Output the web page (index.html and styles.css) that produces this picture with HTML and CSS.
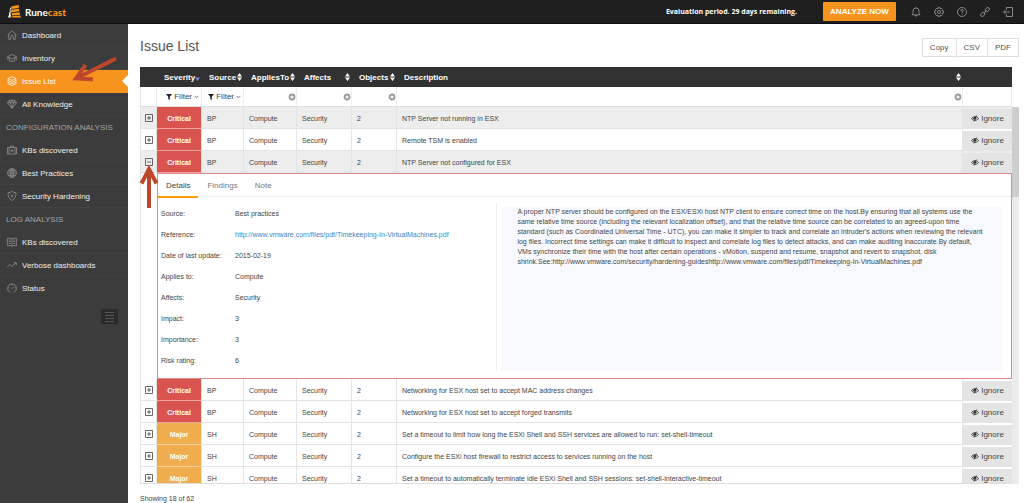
FILE: index.html
```html
<!DOCTYPE html>
<html lang="en">
<head>
    <meta charset="UTF-8">
    <meta name="viewport" content="width=device-width, initial-scale=1.0">
    <title>Runecast - Issue List</title>
    <link rel="stylesheet" href="styles.css">
</head>
<body>
    <!-- shared icons -->
    <svg class="icon-defs" aria-hidden="true">
        <symbol id="i-sort" viewBox="0 0 5 8"><path d="M2.5 0L5 3.400H0zM0 4.600h5L2.500 8z" fill="currentColor"/></symbol>
        <symbol id="i-sort-down" viewBox="0 0 5 8"><path d="M0 4.600h5L2.500 8z" fill="#7b83e8"/></symbol>
        <symbol id="i-funnel" viewBox="0 0 7 7"><path d="M0 0h7L4.400 3.200V7L2.600 5.800V3.200z" fill="#222"/></symbol>
        <symbol id="i-chevron" viewBox="0 0 5 4"><path d="M.5.8l2 2 2-2" fill="none" stroke="#555" stroke-width=".8"/></symbol>
        <symbol id="i-clear" viewBox="0 0 8 8"><circle cx="4" cy="4" r="2.500" fill="#fff" stroke="#999" stroke-width="1.800"/><path d="M3 3l2 2M5 3L3 5" stroke="#ddd" stroke-width=".5"/></symbol>
        <symbol id="i-plus" viewBox="0 0 8 8"><path d="M.5.5h7v7h-7zM2 4h4M4 2v4" fill="none" stroke="#444" stroke-width=".8"/></symbol>
        <symbol id="i-minus" viewBox="0 0 8 8"><path d="M.5.5h7v7h-7zM2 4h4" fill="none" stroke="#444" stroke-width=".8"/></symbol>
        <symbol id="i-hide" viewBox="0 0 9 7"><path d="M.5 3.500Q4.500-1 8.500 3.500 4.500 8 .5 3.500z" fill="none" stroke="#333" stroke-width=".9"/><circle cx="4.300" cy="3.300" r="1.600" fill="#333"/><path d="M6.300.2L3.300 6.800" stroke="#333" stroke-width=".9"/></symbol>
    </svg>

    <header class="topbar">
        <a class="brand" href="#">
            <svg class="brand-mark" viewBox="0 0 13 13" aria-hidden="true">
                <path d="M3.500 1.200L11 0l-.3 3-7.500 1zM3 4.800l8-1.100.3 2.600-8.500 1.200zM3.600 8.200l8-1 .4 2.500-8 .8zM3.800 11.200l8.600-.7.6 2H3.500z" fill="#f7941e"/>
                <path d="M2.300 2.500L1.600 6l.5.500-1.400 2 .7.500L0 12.500h2.600l.3-2.500-.6-1 .5-2-.4-1 .6-3z" fill="#fff"/>
            </svg>
            <span>Rune<b>cast</b></span>
        </a>
        <div class="top-actions">
            <span class="trial">Evaluation period. 29 days remaining.</span>
            <button class="analyze">ANALYZE NOW</button>
            <nav class="top-icons">
                <a href="#" aria-label="Notifications"><svg viewBox="0 0 10 10"><path d="M1 7.800h8L8 6.500V4a3 3 0 0 0-6 0v2.500zM4 8.200a1 1 0 0 0 2 0M5 1V.3"/></svg></a>
                <a href="#" aria-label="Settings"><svg viewBox="0 0 10 10"><path d="M4.200.5h1.600l.3 1.200 1.100-.5 1.400 1.400-.6 1 1.500.5v1.800l-1.500.5.6 1-1.400 1.400-1.100-.5-.3 1.200H4.200l-.3-1.200-1.100.5-1.400-1.400.6-1L.5 5.900V4.100L2 3.600l-.6-1 1.400-1.400 1.100.5z"/><circle cx="5" cy="5" r="1.600"/></svg></a>
                <a href="#" aria-label="Help"><svg viewBox="0 0 10 10"><circle cx="5" cy="5" r="4.500"/><path d="M3.600 4q0-1.500 1.400-1.500T6.400 3.900Q6.400 4.600 5 5.200v.8M5 6.900v.8"/></svg></a>
                <a href="#" aria-label="Links"><svg viewBox="0 0 10 10"><rect x="5" y="1" width="4.600" height="3.200" rx="1.600" transform="rotate(-40 7.300 2.600)"/><rect x=".4" y="5.800" width="4.600" height="3.200" rx="1.600" transform="rotate(-40 2.700 7.400)"/><path d="M3.600 6.400l2.800-2.700"/></svg></a>
                <a href="#" aria-label="Log out"><svg viewBox="0 0 10 10"><path d="M3.500 2.800V.5h6v9h-6V7.200M7 5H.6M2.600 3l-2 2 2 2"/></svg></a>
            </nav>
        </div>
    </header>

    <div class="layout">
        <aside class="sidebar">
            <nav>
                <a class="nav-item" href="#"><svg viewBox="0 0 10 10"><path d="M.5 5L5 .8 9.500 5M1.700 4v5.300h2V6.500a1.300 1.300 0 0 1 2.600 0v2.800h2V4"/></svg>Dashboard</a>
                <a class="nav-item" href="#"><svg viewBox="0 0 10 10"><path d="M.5 3.700L5 1.500l4.500 2.200L5 6zM2.200 4.700v3q2.800 1.600 5.600 0v-3M9.300 4v3.500M.8 4v2.500"/></svg>Inventory</a>
                <a class="nav-item active" href="#"><svg viewBox="0 0 10 10"><path d="M1 2.500L5 .6l4 1.900-4 1.900zM1 2.500v1.800l4 2 4-2V2.500M1 4.300v1.900l4 1.900 4-1.900V4.300M1 6.200v1.500l4 1.800 4-1.800V6.200"/></svg>Issue List</a>
                <a class="nav-item" href="#"><svg viewBox="0 0 10 10"><path d="M2.300 1.200h5.400l1.900 2.500L5 9.200.4 3.700zM.4 3.700h9.200M2.300 1.200l1 2.500L5 9.200l1.700-5.500 1-2.500M3.300 3.700L5 1.200l1.700 2.500"/></svg>All Knowledge</a>
                <h2 class="nav-section">CONFIGURATION ANALYSIS</h2>
                <a class="nav-item" href="#"><svg viewBox="0 0 10 10"><path d="M.5 2.500h9v6.500h-9zM3.500 2.500V1h3v1.500M2 2.500V9M8 2.500V9M3.500 5.700h3M5 4.200v3"/></svg>KBs discovered</a>
                <a class="nav-item" href="#"><svg viewBox="0 0 10 10"><circle cx="5" cy="5" r="4.400"/><ellipse cx="5" cy="5" rx="2" ry="4.400"/><path d="M5 .6v8.800M.6 5h8.800M1.300 2.800h7.400M1.300 7.200h7.400"/></svg>Best Practices</a>
                <a class="nav-item" href="#"><svg viewBox="0 0 10 10"><path d="M5 .5q1.700 1.200 4 1.200Q9.200 7.500 5 9.500.8 7.500 1 1.700 3.300 1.700 5 .5zM3.700 3.500l2.600 2.600M6.300 3.500L3.700 6.100"/></svg>Security Hardening</a>
                <h2 class="nav-section">LOG ANALYSIS</h2>
                <a class="nav-item" href="#"><svg viewBox="0 0 10 10"><path d="M5 1.700Q3 .5.600 1.200v7.600Q3 8 5 9.200 7 8 9.400 8.800V1.200Q7 .5 5 1.700v7.500M1.800 3h2M1.800 4.700h2M1.800 6.400h2M6.200 3h2M6.200 4.700h2M6.200 6.400h2"/></svg>KBs discovered</a>
                <a class="nav-item" href="#"><svg viewBox="0 0 10 10"><path d="M.3 7l2.500-2.300 2 1.500L9 2.800M7 2.700h2.400V5"/></svg>Verbose dashboards</a>
                <a class="nav-item last" href="#"><svg viewBox="0 0 10 10"><path d="M2.500 9a4.400 4.400 0 1 1 5 0M4.500 6.500L7 3.500M1 5h1M8 5h1M5 1v1M2.500 9h1M6.500 9h1"/></svg>Status</a>
            </nav>
            <button class="menu-toggle" aria-label="Collapse menu"><svg viewBox="0 0 17 15"><path d="M4 3.500h9M4 6.500h9M4 9.500h9M4 12.500h9"/></svg></button>
        </aside>

        <main class="content">
            <div class="page-head">
                <h1>Issue List</h1>
                <div class="export">
                    <button>Copy</button>
                    <button>CSV</button>
                    <button>PDF</button>
                </div>
            </div>

            <table class="grid grid-head">
                <colgroup><col class="c-exp"><col class="c-sev"><col class="c-src"><col class="c-app"><col class="c-aff"><col class="c-obj"><col><col class="c-ign"></colgroup>
                <thead>
                    <tr>
                        <th></th>
                        <th><button class="sort">Severity<svg><use href="#i-sort-down"/></svg></button></th>
                        <th><button class="sort">Source<svg><use href="#i-sort"/></svg></button></th>
                        <th><button class="sort">AppliesTo<svg><use href="#i-sort"/></svg></button></th>
                        <th><button class="sort">Affects<svg><use href="#i-sort"/></svg></button></th>
                        <th><button class="sort">Objects<svg><use href="#i-sort"/></svg></button></th>
                        <th><button class="sort">Description<svg><use href="#i-sort"/></svg></button></th>
                        <th></th>
                    </tr>
                    <tr class="filters">
                        <td></td>
                        <td><button class="filter"><svg class="funnel"><use href="#i-funnel"/></svg>Filter<svg class="chev"><use href="#i-chevron"/></svg></button></td>
                        <td><button class="filter"><svg class="funnel"><use href="#i-funnel"/></svg>Filter<svg class="chev"><use href="#i-chevron"/></svg></button></td>
                        <td><div class="search"><input type="text" aria-label="Filter applies to"><button aria-label="Clear"><svg><use href="#i-clear"/></svg></button></div></td>
                        <td><div class="search"><input type="text" aria-label="Filter affects"><button aria-label="Clear"><svg><use href="#i-clear"/></svg></button></div></td>
                        <td><div class="search"><input type="text" aria-label="Filter objects"><button aria-label="Clear"><svg><use href="#i-clear"/></svg></button></div></td>
                        <td><div class="search"><input type="text" aria-label="Filter description"><button aria-label="Clear"><svg><use href="#i-clear"/></svg></button></div></td>
                        <td></td>
                    </tr>
                </thead>
            </table>

            <div class="grid-body">
                <div class="grid-view">
                    <table class="grid">
                        <colgroup><col class="c-exp"><col class="c-sev"><col class="c-src"><col class="c-app"><col class="c-aff"><col class="c-obj"><col><col class="c-ign"></colgroup>
                        <tbody>
                            <tr class="shade">
                                <td class="exp"><button aria-label="Expand"><svg><use href="#i-plus"/></svg></button></td>
                                <td class="sev critical">Critical</td><td>BP</td><td>Compute</td><td>Security</td><td>2</td>
                                <td>NTP Server not running in ESX</td>
                                <td class="ign"><button><svg><use href="#i-hide"/></svg>Ignore</button></td>
                            </tr>
                            <tr>
                                <td class="exp"><button aria-label="Expand"><svg><use href="#i-plus"/></svg></button></td>
                                <td class="sev critical">Critical</td><td>BP</td><td>Compute</td><td>Security</td><td>2</td>
                                <td>Remote TSM is enabled</td>
                                <td class="ign"><button><svg><use href="#i-hide"/></svg>Ignore</button></td>
                            </tr>
                            <tr class="shade">
                                <td class="exp"><button aria-label="Collapse"><svg><use href="#i-minus"/></svg></button></td>
                                <td class="sev critical">Critical</td><td>BP</td><td>Compute</td><td>Security</td><td>2</td>
                                <td>NTP Server not configured for ESX</td>
                                <td class="ign"><button><svg><use href="#i-hide"/></svg>Ignore</button></td>
                            </tr>
                            <tr class="detail-row">
                                <td></td>
                                <td class="detail" colspan="7">
                                    <div class="tabs">
                                        <button class="active">Details</button>
                                        <button>Findings</button>
                                        <button>Note</button>
                                    </div>
                                    <div class="detail-body">
                                        <dl>
                                            <dt>Source:</dt><dd>Best practices</dd>
                                            <dt>Reference:</dt><dd><a href="#">http://www.vmware.com/files/pdf/Timekeeping-In-VirtualMachines.pdf</a></dd>
                                            <dt>Date of last update:</dt><dd>2015-02-19</dd>
                                            <dt>Applies to:</dt><dd>Compute</dd>
                                            <dt>Affects:</dt><dd>Security</dd>
                                            <dt>Impact:</dt><dd>3</dd>
                                            <dt>Importance:</dt><dd>3</dd>
                                            <dt>Risk rating:</dt><dd>6</dd>
                                        </dl>
                                        <p>A proper NTP server should be configured on the ESX/ESXi host NTP client to ensure correct time on the host.By ensuring that all systems use the same relative time source (including the relevant localization offset), and that the relative time source can be correlated to an agreed-upon time standard (such as Coordinated Universal Time - UTC), you can make it simpler to track and correlate an intruder's actions when reviewing the relevant log files. Incorrect time settings can make it difficult to inspect and correlate log files to detect attacks, and can make auditing inaccurate.By default, VMs synchronize their time with the host after certain operations - vMotion, suspend and resume, snapshot and revert to snapshot, disk shrink.See:http://www.vmware.com/security/hardening-guideshttp://www.vmware.com/files/pdf/Timekeeping-In-VirtualMachines.pdf</p>
                                    </div>
                                </td>
                            </tr>
                            <tr>
                                <td class="exp"><button aria-label="Expand"><svg><use href="#i-plus"/></svg></button></td>
                                <td class="sev critical">Critical</td><td>BP</td><td>Compute</td><td>Security</td><td>2</td>
                                <td>Networking for ESX host set to accept MAC address changes</td>
                                <td class="ign"><button><svg><use href="#i-hide"/></svg>Ignore</button></td>
                            </tr>
                            <tr>
                                <td class="exp"><button aria-label="Expand"><svg><use href="#i-plus"/></svg></button></td>
                                <td class="sev critical">Critical</td><td>BP</td><td>Compute</td><td>Security</td><td>2</td>
                                <td>Networking for ESX host set to accept forged transmits</td>
                                <td class="ign"><button><svg><use href="#i-hide"/></svg>Ignore</button></td>
                            </tr>
                            <tr>
                                <td class="exp"><button aria-label="Expand"><svg><use href="#i-plus"/></svg></button></td>
                                <td class="sev major">Major</td><td>SH</td><td>Compute</td><td>Security</td><td>2</td>
                                <td>Set a timeout to limit how long the ESXi Shell and SSH services are allowed to run: set-shell-timeout</td>
                                <td class="ign"><button><svg><use href="#i-hide"/></svg>Ignore</button></td>
                            </tr>
                            <tr>
                                <td class="exp"><button aria-label="Expand"><svg><use href="#i-plus"/></svg></button></td>
                                <td class="sev major">Major</td><td>SH</td><td>Compute</td><td>Security</td><td>2</td>
                                <td>Configure the ESXi host firewall to restrict access to services running on the host</td>
                                <td class="ign"><button><svg><use href="#i-hide"/></svg>Ignore</button></td>
                            </tr>
                            <tr>
                                <td class="exp"><button aria-label="Expand"><svg><use href="#i-plus"/></svg></button></td>
                                <td class="sev major">Major</td><td>SH</td><td>Compute</td><td>Security</td><td>2</td>
                                <td>Set a timeout to automatically terminate idle ESXi Shell and SSH sessions: set-shell-interactive-timeout</td>
                                <td class="ign"><button><svg><use href="#i-hide"/></svg>Ignore</button></td>
                            </tr>
                        </tbody>
                    </table>
                </div>
                <div class="scrollbar"><div class="thumb"></div></div>
            </div>
            <p class="count">Showing 18 of 62</p>
        </main>
    </div>

    <!-- callout arrows -->
    <svg class="arrow arrow-menu" viewBox="0 0 50 28" aria-hidden="true"><path d="M46 2.500L8 21.500M15.500 9L6 22.500l17 .8" fill="none" stroke="#bd472d" stroke-width="4"/></svg>
    <svg class="arrow arrow-row" viewBox="0 0 20 44" aria-hidden="true"><path d="M10 44V6M2.500 19.500L10 5l7.500 14.500" fill="none" stroke="#bd472d" stroke-width="4"/></svg>
</body>
</html>
```

FILE: styles.css
```css
* {
    box-sizing: border-box;
}
body {
    margin: 0;
    height: 100vh;
    display: flex;
    flex-direction: column;
    position: relative;
    overflow: hidden;
    background: #fff;
    color: #444;
    font-family: "Liberation Sans", Arial, sans-serif;
    font-size: 7px;
}
button, input {
    font-family: inherit;
    font-size: 8px;
    color: inherit;
    margin: 0;
    padding: 0;
    border: none;
    background: none;
}
button {
    cursor: pointer;
}
a {
    text-decoration: none;
    color: inherit;
}
svg {
    display: block;
    flex: none;
}
.icon-defs {
    position: absolute;
    width: 0;
    height: 0;
}

/* top bar */
.topbar {
    flex: none;
    height: 24px;
    display: flex;
    align-items: center;
    justify-content: space-between;
    padding: 0 11px 0 8px;
    background: #1f1f1f;
    border-bottom: 1px solid #0c0c0c;
    color: #fff;
}
.brand {
    display: flex;
    align-items: center;
    gap: 4px;
    font-family: Lato, sans-serif;
    font-size: 10px;
    font-weight: bold;
}
.brand b {
    color: #f7941e;
}
.brand-mark {
    width: 13px;
    height: 13px;
}
.top-actions {
    display: flex;
    align-items: center;
}
.trial {
    margin-right: 26px;
    font-family: "Open Sans", sans-serif;
    font-weight: bold;
    font-size: 7px;
}
.analyze {
    width: 73px;
    height: 19px;
    margin-right: 15px;
    border-radius: 1px;
    background: #f7941e;
    font-weight: bold;
    color: #fff;
}
.top-icons {
    display: flex;
    gap: 13px;
}
.top-icons svg {
    width: 10px;
    height: 10px;
    fill: none;
    stroke: #a0a0a0;
    stroke-width: .8;
}

/* sidebar */
.layout {
    flex: 1;
    min-height: 0;
    display: flex;
}
.sidebar {
    flex: none;
    width: 128px;
    background: #3c3c3c;
    color: #eee;
}
.nav-item {
    position: relative;
    display: flex;
    align-items: center;
    gap: 5px;
    height: 23px;
    padding-left: 7px;
    border-bottom: 1px solid #424242;
    font-size: 8px;
}
.nav-item.last {
    border-color: transparent;
}
.nav-item svg {
    width: 10px;
    height: 10px;
    fill: none;
    stroke: #999;
    stroke-width: .7;
}
.nav-item.active {
    background: #f7941e;
    border-color: #f7941e;
    color: #fff;
}
.nav-item.active svg {
    stroke: #fff;
}
.nav-item.active::after {
    content: "";
    position: absolute;
    right: 0;
    top: 5px;
    border: 6px solid transparent;
    border-left: none;
    border-right-color: #fff;
}
.nav-section {
    margin: 0;
    padding-left: 6px;
    line-height: 23px;
    font-size: 8px;
    font-weight: normal;
    color: #a5a5a5;
}
.menu-toggle {
    display: block;
    width: 17px;
    height: 15px;
    margin: 9px 10px 0 auto;
    background: #2b2b2b;
}
.menu-toggle svg {
    stroke: #555;
    stroke-width: 1;
}

/* content */
.content {
    flex: 1;
    min-width: 0;
    display: flex;
    flex-direction: column;
    padding: 0 5px 0 12px;
}
.page-head {
    flex: none;
    height: 43px;
    display: flex;
    align-items: center;
    justify-content: space-between;
}
.page-head h1 {
    margin: 0;
    font-size: 14px;
    font-weight: normal;
    color: #555;
}
.export {
    display: flex;
    margin-top: 4px;
}
.export button {
    height: 19px;
    padding: 0 7px;
    border: 1px solid #ddd;
    border-left-width: 0;
    color: #555;
}
.export button:first-child {
    border-left-width: 1px;
    border-radius: 1px 0 0 1px;
}

/* issue table */
.grid {
    width: 100%;
    table-layout: fixed;
    border-spacing: 0;
}
.grid-head {
    width: calc(100% - 7px);
    flex: none;
}
.c-exp { width: 17px; }
.c-sev, .c-obj { width: 45px; }
.c-src { width: 42px; }
.c-app { width: 53px; }
.c-aff { width: 55px; }
.c-ign { width: 49px; }

.grid th, .grid td {
    padding: 0;
}
.grid td:first-child {
    border-left: 1px solid #e4e4e4;
}
.grid th {
    height: 20px;
    background: #323232;
    color: #fff;
}
.sort {
    width: 100%;
    display: flex;
    align-items: center;
    justify-content: space-between;
    padding: 0 2px 0 7px;
    font-weight: bold;
}
.sort svg {
    width: 5px;
    height: 8px;
}
.grid .filters td {
    height: 20px;
    border-right: 1px solid #eee;
    border-bottom: 1px solid #ddd;
}
.filter {
    width: 100%;
    display: flex;
    align-items: center;
    justify-content: flex-end;
    gap: 2px;
    padding-right: 2px;
    color: #444;
}
.funnel {
    width: 6px;
    height: 6px;
}
.chev {
    width: 5px;
    height: 4px;
}
.search {
    display: flex;
    align-items: center;
}
.search input {
    flex: 1;
    min-width: 0;
    height: 18px;
    padding-left: 5px;
    outline: none;
}
.search svg {
    width: 8px;
    height: 8px;
}

.grid-body {
    flex: 1;
    min-height: 0;
    display: flex;
}
.grid-view {
    flex: 1;
    min-width: 0;
    overflow: hidden;
    border-bottom: 1px solid #ddd;
}
.grid tbody td {
    height: 22px;
    padding: 1px 0 0 5px;
    border-right: 1px solid #e4e4e4;
    border-bottom: 1px solid #e4e4e4;
    white-space: nowrap;
}
.shade td {
    background: #ededed;
}
.grid tbody .exp {
    padding: 0 0 0 4px;
}
.exp button {
    display: block;
}
.exp svg {
    width: 8px;
    height: 8px;
}
.grid tbody .sev {
    padding: 1px 0 0;
    text-align: center;
    font-weight: bold;
    color: #fff;
}
.grid .critical {
    background: #d9534f;
    border-bottom-color: #eba5a2;
}
.grid .major {
    background: #f0ad4e;
    border-bottom-color: #f6d09b;
}
.grid tbody .ign {
    border-right: none;
    padding-left: 0;
}
.ign button {
    width: 100%;
    height: 19px;
    display: flex;
    align-items: center;
    justify-content: center;
    gap: 2px;
    background: #e4e4e4;
}
.ign svg {
    width: 8px;
    height: 7px;
}
.scrollbar {
    flex: none;
    width: 7px;
    background: #ebebeb;
}
.thumb {
    height: 24%;
    background: #cdcdcd;
}

/* expanded issue */
.grid tbody .detail-row td {
    padding: 0;
    border-bottom: none;
    border-right: none;
}
.grid tbody .detail-row .detail {
    border: 1px solid #e08a87;
    white-space: normal;
}
.tabs {
    display: flex;
    gap: 1px;
    height: 23px;
    border-bottom: 1px solid #eee;
}
.tabs button {
    height: 24px;
    padding: 0 8px;
    border-bottom: 2px solid transparent;
    color: #777;
}
.tabs .active {
    border-bottom-color: #ff9c0a;
    color: #444;
}
.detail-body {
    display: grid;
    grid-template-columns: 2fr 3fr;
    padding: 6px 9px 7px 3px;
}
.detail dl {
    display: grid;
    grid-template-columns: 74px 1fr;
    margin: 0;
    line-height: 21px;
    border-right: 1px solid #eee;
}
.detail dd {
    margin: 0;
}
.detail dd a {
    color: #4285c8;
}
.detail p {
    margin: 4px 0 0 4px;
    padding: 0 16px;
    line-height: 10px;
    background: #f8f9ff;
}
.count {
    flex: none;
    margin: 0;
    padding: 10px 0 0;
    line-height: 9px;
}

/* callout arrows */
.arrow {
    position: absolute;
    pointer-events: none;
}
.arrow-menu {
    left: 70px;
    top: 56px;
    width: 50px;
    height: 28px;
}
.arrow-row {
    left: 139px;
    top: 164px;
    width: 20px;
    height: 44px;
}
```
